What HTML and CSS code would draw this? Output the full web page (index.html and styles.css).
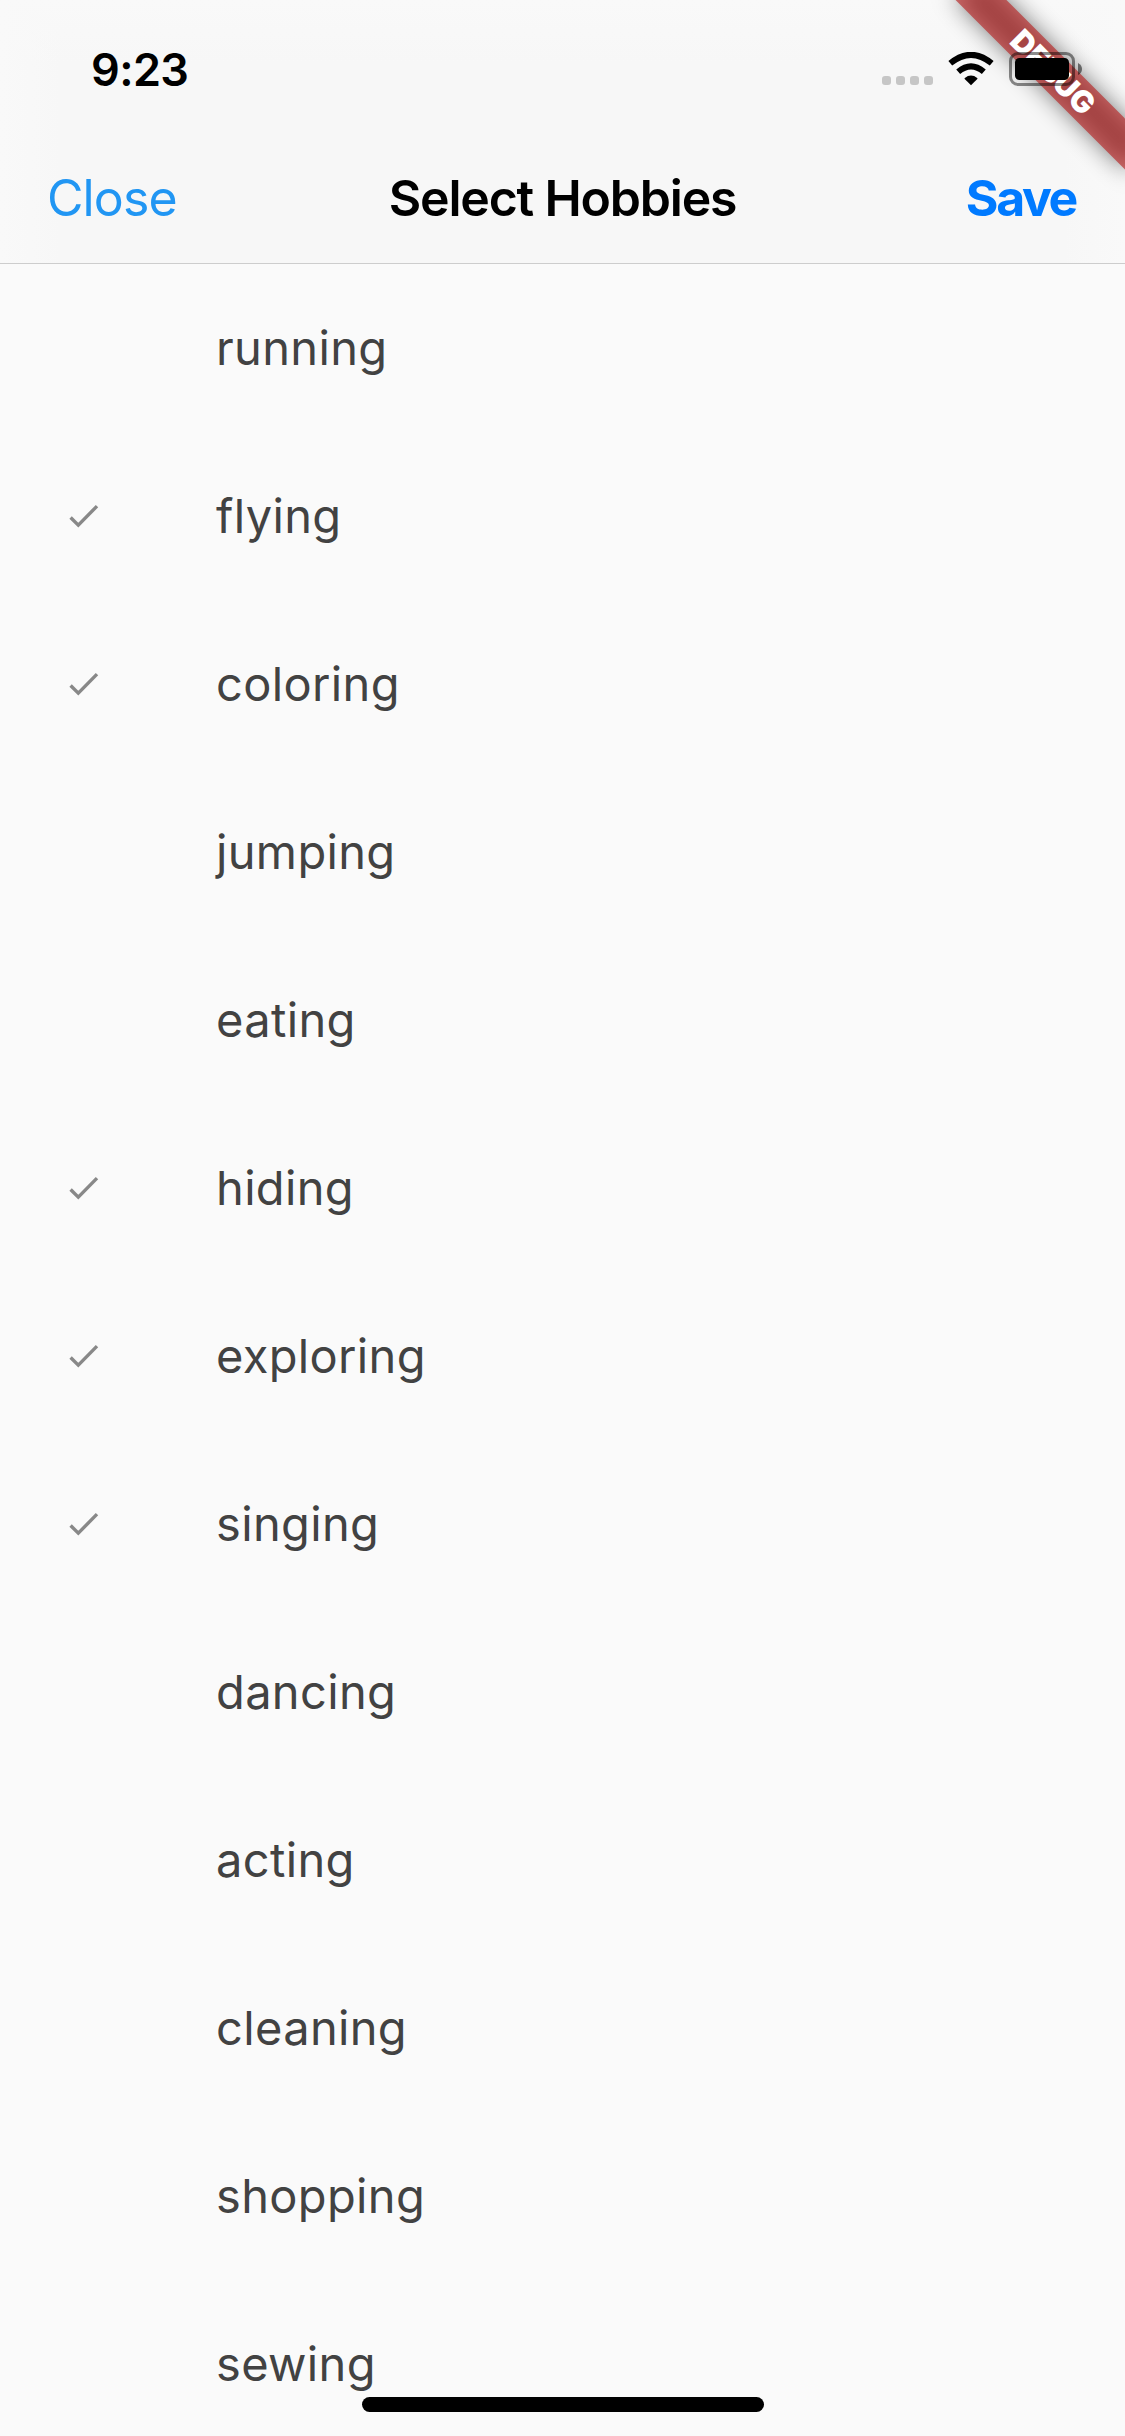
FILE: index.html
```html
<!DOCTYPE html>
<html lang="en">
<head>
<meta charset="utf-8">
<title>Select Hobbies</title>
<link rel="stylesheet" href="styles.css">
</head>
<body>
<svg class="defs" width="0" height="0" aria-hidden="true">
  <symbol id="check" viewBox="0 0 36 36"><path d="M4.6 19.5 12.3 27.2 31 8.1" fill="none" stroke="#888" stroke-width="3.4"/></symbol>
</svg>
<div class="screen">
  <header class="header">
    <div class="status">
      <span class="time">9:23</span>
      <div class="indicators">
        <div class="signal"><i></i><i></i><i></i><i></i></div>
        <svg class="wifi" width="46" height="34" viewBox="0 0 46 34">
          <path d="M23 33.3 16.7 27Q16.2 26.4 16.8 25.9Q23 21 29.2 25.9Q29.8 26.4 29.3 27Z"/>
          <path d="M10.2 19.8Q23 8.8 35.8 19.8" fill="none" stroke="#000" stroke-width="6"/>
          <path d="M2.3 11.3Q23 -5.6 43.7 11.3" fill="none" stroke="#000" stroke-width="6"/>
        </svg>
        <svg class="battery" width="74" height="34" viewBox="0 0 74 34">
          <rect x="1.5" y="1.5" width="63" height="31" rx="7.5" fill="none" stroke="#000" stroke-opacity=".45" stroke-width="3"/>
          <rect x="6" y="6" width="54" height="22" rx="4.5"/>
          <path d="M69 11Q73 13 73 17T69 23Z" fill-opacity=".5"/>
        </svg>
      </div>
    </div>
    <nav class="nav">
      <a class="close">Close</a>
      <h1 class="title">Select Hobbies</h1>
      <a class="save">Save</a>
    </nav>
  </header>
  <ul class="list">
    <li class="row"><span class="mark"></span><span class="label">running</span></li>
    <li class="row"><span class="mark"><svg><use href="#check"/></svg></span><span class="label">flying</span></li>
    <li class="row"><span class="mark"><svg><use href="#check"/></svg></span><span class="label">coloring</span></li>
    <li class="row"><span class="mark"></span><span class="label">jumping</span></li>
    <li class="row"><span class="mark"></span><span class="label">eating</span></li>
    <li class="row"><span class="mark"><svg><use href="#check"/></svg></span><span class="label">hiding</span></li>
    <li class="row"><span class="mark"><svg><use href="#check"/></svg></span><span class="label">exploring</span></li>
    <li class="row"><span class="mark"><svg><use href="#check"/></svg></span><span class="label">singing</span></li>
    <li class="row"><span class="mark"></span><span class="label">dancing</span></li>
    <li class="row"><span class="mark"></span><span class="label">acting</span></li>
    <li class="row"><span class="mark"></span><span class="label">cleaning</span></li>
    <li class="row"><span class="mark"></span><span class="label">shopping</span></li>
    <li class="row"><span class="mark"></span><span class="label">sewing</span></li>
  </ul>
  <div class="debug-shadow"></div>
  <div class="debug-banner">DEBUG</div>
  <div class="home-bar"></div>
</div>
</body>
</html>
```
FILE: styles.css
```css
* { box-sizing: border-box; }
body { margin: 0; font-family: Inter, "Liberation Sans", sans-serif; }
.defs { position: absolute; }
.screen {
  position: relative;
  width: 1125px;
  height: 2436px;
  overflow: hidden;
  background: #fafafa;
}
.header {
  height: 264px;
  border-bottom: 1px solid #cdcdcd;
  background:
    linear-gradient(to right, #f9f9f9, rgba(249, 249, 249, 0) 63px, rgba(249, 249, 249, 0) 1062px, #f9f9f9),
    linear-gradient(to bottom, #f9f9f9, #f7f7f7 63px);
}
.status {
  display: flex;
  justify-content: space-between;
  height: 132px;
  padding: 0 42px 0 91px;
}
.time {
  padding-top: 41px;
  font-size: 45px;
  line-height: 57px;
  font-weight: 600;
  letter-spacing: -0.6px;
}
.indicators {
  position: relative;
  z-index: 2;
  display: flex;
  align-items: flex-start;
  padding-top: 52px;
}
.signal { display: flex; gap: 5px; margin: 24px 15px 0 0; }
.signal i { width: 9px; height: 9px; border-radius: 3px; background: #c6c6c6; }
.wifi { margin-right: 15px; }
.nav {
  display: grid;
  grid-template-columns: 1fr auto 1fr;
  align-items: center;
  height: 131px;
  padding: 0 48px 0 48px;
  line-height: 60px;
}
.close { margin-left: -1px; color: #2196f3; font-size: 50px; letter-spacing: -0.9px; }
.title { margin: 0; font-size: 50px; font-weight: 600; letter-spacing: -1.2px; }
.save { justify-self: end; margin-right: 1px; color: #007aff; font-size: 50px; font-weight: 700; letter-spacing: -2.4px; }
.list { margin: 0; padding: 0; list-style: none; }
.row { display: flex; align-items: center; height: 168px; padding-left: 66px; }
.mark { display: flex; width: 150px; height: 36px; }
.mark svg { width: 36px; height: 36px; }
.label { padding-bottom: 1px; color: #424242; font-size: 47px; line-height: 59px; letter-spacing: 0.35px; }
.debug-shadow, .debug-banner {
  position: absolute;
  left: 933px;
  top: 54px;
  width: 240px;
  height: 36px;
  transform: rotate(45deg);
}
.debug-shadow { background: rgba(0, 0, 0, 0.5); filter: blur(11.9px); }
.debug-banner {
  background: rgba(183, 28, 28, 0.627);
  color: #fff;
  font-size: 30.5px;
  line-height: 36px;
  font-weight: 900;
  letter-spacing: -0.3px;
  text-align: center;
}
.home-bar {
  position: absolute;
  left: 362px;
  top: 2397px;
  width: 402px;
  height: 15px;
  border-radius: 8px;
  background: #000;
}
```
